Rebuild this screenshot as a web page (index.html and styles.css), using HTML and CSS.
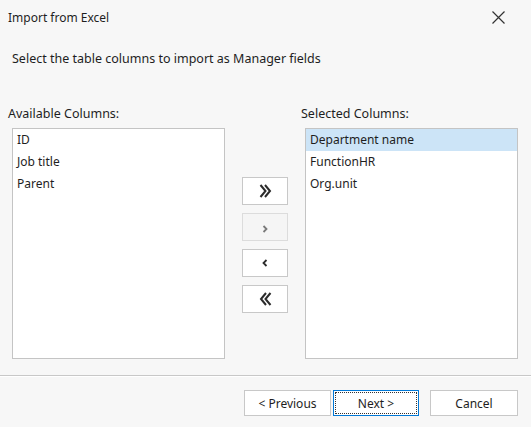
FILE: index.html
```html
<!doctype html>
<html>
<head>
<meta charset="utf-8">
<title>Import from Excel</title>
<link rel="stylesheet" href="styles.css">
</head>
<body>
<div class="dialog">
  <div class="titlebar">
    <span class="title">Import from Excel</span>
    <span class="close">
      <svg width="13" height="13" viewBox="0 0 13 13"><path d="M0.5 0.5 L12.5 12.5 M12.5 0.5 L0.5 12.5" stroke="#333" stroke-width="1.2" fill="none"/></svg>
    </span>
  </div>
  <p class="intro">Select the table columns to import as Manager fields</p>
  <div class="picker">
    <div class="col">
      <div class="label">Available Columns:</div>
      <ul class="listbox">
        <li>ID</li>
        <li>Job title</li>
        <li>Parent</li>
      </ul>
    </div>
    <div class="movers">
      <button class="mover" title="Add all">
        <svg width="13" height="14" viewBox="0 0 13 14"><path d="M1.5 1 L6.5 7 L1.5 13 M6 1 L11 7 L6 13" stroke="#2b2b2b" stroke-width="2" fill="none"/></svg>
      </button>
      <button class="mover low" title="Add" disabled>
        <svg width="6" height="8" viewBox="0 0 6 8"><path d="M1.5 1 L4.5 4 L1.5 7" stroke="#7a7a7a" stroke-width="1.8" fill="none"/></svg>
      </button>
      <button class="mover" title="Remove">
        <svg width="6" height="8" viewBox="0 0 6 8"><path d="M4.5 1 L1.5 4 L4.5 7" stroke="#2b2b2b" stroke-width="1.8" fill="none"/></svg>
      </button>
      <button class="mover" title="Remove all">
        <svg width="13" height="14" viewBox="0 0 13 14"><path d="M7 1 L2 7 L7 13 M11.5 1 L6.5 7 L11.5 13" stroke="#2b2b2b" stroke-width="2" fill="none"/></svg>
      </button>
    </div>
    <div class="col">
      <div class="label">Selected Columns:</div>
      <ul class="listbox">
        <li class="selected">Department name</li>
        <li>FunctionHR</li>
        <li>Org.unit</li>
      </ul>
    </div>
  </div>
  <div class="footer">
    <button class="btn">&lt; Previous</button>
    <button class="btn default">Next &gt;</button>
    <button class="btn cancel">Cancel</button>
  </div>
</div>
</body>
</html>
```

FILE: styles.css
```css
html, body {
  margin: 0;
  padding: 0;
}

body {
  width: 531px;
  height: 427px;
  background: #f7f7f7;
  font-family: "Noto Sans", "Open Sans", sans-serif;
  font-size: 12px;
  color: #1e1e1e;
  overflow: hidden;
}

.titlebar {
  height: 34px;
  display: flex;
  align-items: center;
  justify-content: space-between;
  padding: 0 26px 0 8px;
}

.close {
  display: flex;
  line-height: 0;
}

.intro {
  margin: 16px 0 0 12px;
  line-height: 18px;
  font-size: 12.5px;
}

.picker {
  display: flex;
  margin-top: 37px;
  padding-left: 12px;
}

.col .label {
  margin: 0 0 5px -4px;
  height: 18px;
  line-height: 18px;
  font-size: 12.5px;
}

.listbox {
  box-sizing: border-box;
  list-style: none;
  margin: 0;
  padding: 0;
  width: 213px;
  height: 231px;
  background: #fff;
  border: 1px solid #c4c4c4;
}

.listbox li {
  height: 22px;
  line-height: 22px;
  padding-left: 4px;
}

.listbox li.selected {
  background: #cce4f7;
}

.movers {
  width: 80px;
  display: flex;
  flex-direction: column;
  align-items: center;
  gap: 8px;
  padding-top: 72px;
}

.mover {
  box-sizing: border-box;
  width: 46px;
  height: 28px;
  padding: 0;
  display: flex;
  align-items: center;
  justify-content: center;
  background: #fff;
  border: 1px solid #c8c8c8;
}

.mover.low {
  padding-top: 4px;
}

.mover:disabled {
  background: #f5f5f5;
  border-color: #dcdcdc;
}

.footer {
  margin-top: 16px;
  border-top: 1px solid #c8c8c8;
  box-shadow: inset 0 1px 0 #fff;
  display: flex;
  padding: 14px 13px 0 244px;
}

.btn {
  box-sizing: border-box;
  width: 87px;
  height: 26px;
  padding: 0;
  background: #fff;
  border: 1px solid #c8c8c8;
  font-family: "Noto Sans", sans-serif;
  font-size: 12px;
  color: #1e1e1e;
}

.btn.default {
  margin-left: 2px;
  width: 86px;
  border: 1px solid #0078d7;
  outline: 1px dotted #333;
  outline-offset: -3px;
}

.btn.cancel {
  margin-left: auto;
  width: 88px;
}
```
